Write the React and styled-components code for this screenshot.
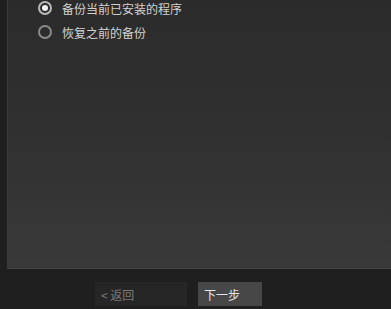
import React, { useState } from 'react'
import styled, { createGlobalStyle } from 'styled-components'

const GlobalStyle = createGlobalStyle`
  html, body {
    margin: 0;
    padding: 0;
    background: #1f1f20;
    overflow: hidden;
  }
  body {
    font-family: "Noto Sans CJK SC", "Liberation Sans", sans-serif;
  }
`

const Page = styled.div`
  width: 391px;
  height: 309px;
  display: flex;
  flex-direction: column;
  background: #1f1f20;
`

const Panel = styled.div`
  margin-left: 7px;
  height: 269px;
  box-sizing: border-box;
  background: linear-gradient(180deg, #2b2b2b 0%, #303030 50%, #393939 100%);
  border-left: 1px solid #3a3a3a;
  border-bottom: 1px solid #454545;
  padding: 1px 0 0 30px;
  display: flex;
  flex-direction: column;
  gap: 10px;
`

const Option = styled.label`
  display: flex;
  align-items: center;
  gap: 10px;
  height: 14px;
  color: #d2d2d2;
  font-size: 12px;
  cursor: pointer;
`

const Radio = styled.span`
  width: 14px;
  height: 14px;
  box-sizing: border-box;
  border-radius: 50%;
  border: 2px solid ${(p) => (p.checked ? '#b8b8b8' : '#8a8a8a')};
  display: flex;
  align-items: center;
  justify-content: center;

  &::after {
    content: '';
    width: 6px;
    height: 6px;
    border-radius: 50%;
    background: ${(p) => (p.checked ? '#f4f4f4' : 'transparent')};
  }
`

const Footer = styled.div`
  flex: 1;
  display: flex;
  align-items: flex-start;
  padding: 13px 0 0 95px;
  gap: 11px;
`

const Button = styled.button`
  height: 24px;
  width: ${(p) => p.width}px;
  border: none;
  padding: 0 0 0 6px;
  text-align: left;
  font-family: "Noto Sans CJK SC", "Liberation Sans", sans-serif;
  font-size: 12px;
  background: ${(p) => (p.primary ? '#474747' : '#262626')};
  color: ${(p) => (p.primary ? '#e6e6e6' : '#7a7a7a')};
`

const options = ['备份当前已安装的程序', '恢复之前的备份']

const App = () => {
  const [selected, setSelected] = useState(0)
  return (
    <>
      <GlobalStyle />
      <Page>
        <Panel>
          {options.map((label, i) => (
            <Option key={label} onClick={() => setSelected(i)}>
              <Radio checked={selected === i} />
              {label}
            </Option>
          ))}
        </Panel>
        <Footer>
          <Button width={92}>&lt; 返回</Button>
          <Button width={64} primary>
            下一步
          </Button>
        </Footer>
      </Page>
    </>
  )
}

export default App
